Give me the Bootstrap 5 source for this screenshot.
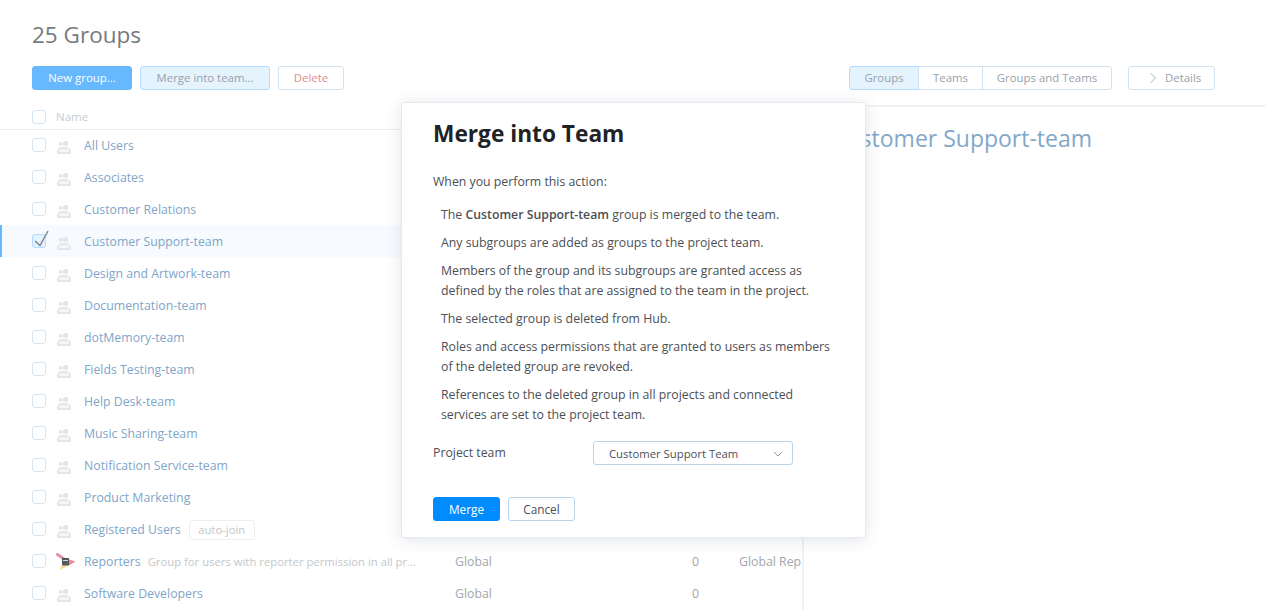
<!DOCTYPE html>
<html lang="en">
<head>
<meta charset="utf-8">
<title>Groups</title>
<link href="https://cdn.jsdelivr.net/npm/bootstrap@5.3.0/dist/css/bootstrap.min.css" rel="stylesheet">
<style>
html,body{height:610px;overflow:hidden;background:#fff}
body{font-family:"Open Sans","Noto Sans",sans-serif;font-size:12.3px;line-height:20px;color:#7f8b95;position:relative}
.page-head{padding:20px 32px 0}
.page-title{font-size:22.5px;line-height:30px;font-weight:400;color:#77797c;margin:0 0 16px}
.tools{height:24px;padding:0 51px 0 32px}
.tbtn{height:24px;border:1px solid #cfe3f5;border-radius:3px;background:#fff;font-size:11.4px;line-height:22px;padding:0;text-align:center;color:#99a1a9;white-space:nowrap}
.tbtn-primary{background:#66b8ff;border-color:#66b8ff;color:#fff;width:100px}
.tbtn-active{background:#e5f3ff;border-color:#b3dbff}
.tbtn-danger{color:#e08b92;width:66px}
.tb-merge{width:130px}
.tb-groups{width:70px}
.tb-teams{width:65px}
.tb-both{width:130px}
.tb-details{width:87px;padding-left:20px}
.seg{display:flex}
.seg .tbtn{border-radius:0;margin-left:-1px}
.seg .tbtn:first-child{border-radius:3px 0 0 3px;margin-left:0}
.seg .tbtn:last-child{border-radius:0 3px 3px 0}
.split{display:flex;height:520px}
.listpane{width:802px;flex:none;overflow:hidden;margin-top:16px}
.detailpane{flex:1;border-left:2px solid #eff2f6;border-top:2px solid #f0f2f6;margin-top:15px;padding:16px 0 0 28px;font-size:23px;line-height:30px;color:#82a8c9;white-space:nowrap}
.lhead{height:24px;border-bottom:1px solid #eceef1;display:flex;align-items:center;padding-left:32px;color:#c9ccd0;font-size:11.5px;margin-bottom:-1px}
.lhead-name{margin-left:10px;line-height:18px;margin-top:-1px}
.lhead .cb{margin-top:-1px}
.lrow{height:32px;display:flex;align-items:center;padding:2px 0 0 32px;white-space:nowrap;position:relative}
.lrow .cb{margin-top:-2px}
.lrow-sel{background:#f7fbff;box-shadow:inset 2px 0 0 #66b8ff}
.cb{width:14px;height:14px;border:1px solid #d6e4f1;border-radius:3px;flex:none;position:relative;background:#fff}
.cb-on{background:#e5f3ff;border-color:#b3dbff}
.cb-on svg{position:absolute;left:-1px;top:-5px}
.uic{width:16px;height:18px;margin-left:10px;margin-top:2px;flex:none}
.repic{width:20px;height:18px;margin-left:10px;flex:none}
.gname{margin-left:12px;color:#7fa5c9}
.gname-rep{margin-left:8px}
.gdesc{margin-left:7px;color:#c4c7cb;font-size:11.3px}
.ajoin{margin-left:8px;border:1px solid #eceef1;border-radius:3px;height:20px;line-height:18px;width:66px;text-align:center;font-size:11.3px;color:#c4c7cb}
.c-scope{color:#a2a6ab;position:absolute;left:455px}
.c-num{color:#a2a6ab;position:absolute;left:692px}
.c-role{color:#a2a6ab;position:absolute;left:739px}
.dlg{position:absolute;left:401px;top:102px;width:465px;height:436px;background:#fff;border:1px solid #e6e9ee;border-radius:3px;box-shadow:0 2px 16px rgba(60,75,100,.15);padding:16px 30px 0 31px;color:#4b4f55}
.dlg-title{font-size:22.7px;line-height:30px;font-weight:700;color:#1f2326;margin:0 0 23px}
.dlg-lead{margin:0 0 13px}
.dlg p.item{margin:0 0 8px 8px}
.dlg-field{display:flex;margin-top:16px;height:24px}
.dlg-label{width:160px;flex:none;line-height:24px}
.sel{width:200px;height:24px;border:1px solid #b9d3e8;border-radius:3px;padding:1px 9px 0 15px;line-height:22px;font-size:11.3px;display:flex;justify-content:space-between;align-items:center;color:#4b4f55}
.dlg-foot{display:flex;gap:8px;margin-top:32px}
.dbtn{width:67px;height:24px;border:1px solid #b9d3e8;border-radius:3px;background:#fff;color:#4b4f55;font-size:11.8px;line-height:22px;padding:0;text-align:center}
.dbtn-main{background:#008bff;border-color:#008bff;color:#fff}
.svgdefs{position:absolute;width:0;height:0}
</style>
</head>
<body>
<svg class="svgdefs" aria-hidden="true"><defs>
<g id="usr"><ellipse cx="9.500" cy="5.500" rx="2.800" ry="2.500" fill="#e6e6e8"/><circle cx="4.700" cy="6" r="2" fill="#e6e6e8"/><path d="M1 16v-3.500C1 11.500 2 11 3 10.500 3.500 9.500 4 9 5 9h6c1 0 1.500.5 2 1.500 1 .5 2 1 2 2V16z" fill="#e6e6e8"/><rect x="3" y="11.500" width="10" height="2.300" rx=".8" fill="#fafafa"/></g>
</defs></svg>

<div class="page-head"><h1 class="page-title">25 Groups</h1></div>
<div class="tools d-flex align-items-center">
  <div class="tbtn tbtn-primary">New group...</div>
  <div class="tbtn tbtn-active tb-merge ms-2">Merge into team...</div>
  <div class="tbtn tbtn-danger ms-2">Delete</div>
  <div class="seg ms-auto">
    <div class="tbtn tbtn-active tb-groups">Groups</div><div class="tbtn tb-teams">Teams</div><div class="tbtn tb-both">Groups and Teams</div>
  </div>
  <div class="tbtn tb-details d-flex align-items-center gap-2 ms-3"><svg width="8" height="12" viewBox="0 0 8 12"><path d="M1.500 1 6.500 6l-5 5" fill="none" stroke="#b5b9bd"/></svg>Details</div>
</div>

<div class="split">
  <div class="listpane">
    <div class="lhead"><span class="cb"></span><span class="lhead-name">Name</span></div>
    <div class="lrow"><span class="cb"></span><svg class="uic"><use href="#usr"/></svg><span class="gname">All Users</span></div>
    <div class="lrow"><span class="cb"></span><svg class="uic"><use href="#usr"/></svg><span class="gname">Associates</span></div>
    <div class="lrow"><span class="cb"></span><svg class="uic"><use href="#usr"/></svg><span class="gname">Customer Relations</span></div>
    <div class="lrow lrow-sel"><span class="cb cb-on"><svg width="18" height="18" viewBox="0 0 18 18"><path d="M3 11l5 4.500L16 1" fill="none" stroke="#84898f" stroke-width="1.500"/></svg></span><svg class="uic"><use href="#usr"/></svg><span class="gname">Customer Support-team</span></div>
    <div class="lrow"><span class="cb"></span><svg class="uic"><use href="#usr"/></svg><span class="gname">Design and Artwork-team</span></div>
    <div class="lrow"><span class="cb"></span><svg class="uic"><use href="#usr"/></svg><span class="gname">Documentation-team</span></div>
    <div class="lrow"><span class="cb"></span><svg class="uic"><use href="#usr"/></svg><span class="gname">dotMemory-team</span></div>
    <div class="lrow"><span class="cb"></span><svg class="uic"><use href="#usr"/></svg><span class="gname">Fields Testing-team</span></div>
    <div class="lrow"><span class="cb"></span><svg class="uic"><use href="#usr"/></svg><span class="gname">Help Desk-team</span></div>
    <div class="lrow"><span class="cb"></span><svg class="uic"><use href="#usr"/></svg><span class="gname">Music Sharing-team</span></div>
    <div class="lrow"><span class="cb"></span><svg class="uic"><use href="#usr"/></svg><span class="gname">Notification Service-team</span></div>
    <div class="lrow"><span class="cb"></span><svg class="uic"><use href="#usr"/></svg><span class="gname">Product Marketing</span></div>
    <div class="lrow"><span class="cb"></span><svg class="uic"><use href="#usr"/></svg><span class="gname">Registered Users</span><span class="ajoin">auto-join</span></div>
    <div class="lrow"><span class="cb"></span>
      <svg class="repic" viewBox="0 0 20 18"><path d="M1.500 1.500 9 6.500" stroke="#e08fb0" stroke-width="3" stroke-linecap="round"/><path d="M12 6l7.500 2.500L13 12.500z" fill="#f08a98"/><path d="M4 17l9-5-1-1-7 2z" fill="#f9dd88"/><rect x="6" y="5" width="7" height="7.500" fill="#55595e"/><rect x="7" y="7" width="5" height="1" fill="#d8d8d8"/></svg>
      <span class="gname gname-rep">Reporters</span><span class="gdesc">Group for users with reporter permission in all pr...</span>
      <span class="c-scope">Global</span><span class="c-num">0</span><span class="c-role">Global Rep</span></div>
    <div class="lrow"><span class="cb"></span><svg class="uic"><use href="#usr"/></svg><span class="gname">Software Developers</span><span class="c-scope">Global</span><span class="c-num">0</span></div>
  </div>
  <div class="detailpane">Customer Support-team</div>
</div>

<div class="dlg" role="dialog">
  <h2 class="dlg-title">Merge into Team</h2>
  <p class="dlg-lead">When you perform this action:</p>
  <p class="item">The <b class="fw-semibold">Customer Support-team</b> group is merged to the team.</p>
  <p class="item">Any subgroups are added as groups to the project team.</p>
  <p class="item">Members of the group and its subgroups are granted access as defined by the roles that are assigned to the team in the project.</p>
  <p class="item">The selected group is deleted from Hub.</p>
  <p class="item">Roles and access permissions that are granted to users as members of the deleted group are revoked.</p>
  <p class="item">References to the deleted group in all projects and connected services are set to the project team.</p>
  <div class="dlg-field"><div class="dlg-label">Project team</div>
    <div class="sel">Customer Support Team<svg width="10" height="6" viewBox="0 0 10 6"><path d="M1 1l4 4 4-4" fill="none" stroke="#8e9399"/></svg></div></div>
  <div class="dlg-foot"><button class="dbtn dbtn-main">Merge</button><button class="dbtn">Cancel</button></div>
</div>
<script src="https://cdn.jsdelivr.net/npm/bootstrap@5.3.0/dist/js/bootstrap.bundle.min.js"></script>
</body>
</html>
